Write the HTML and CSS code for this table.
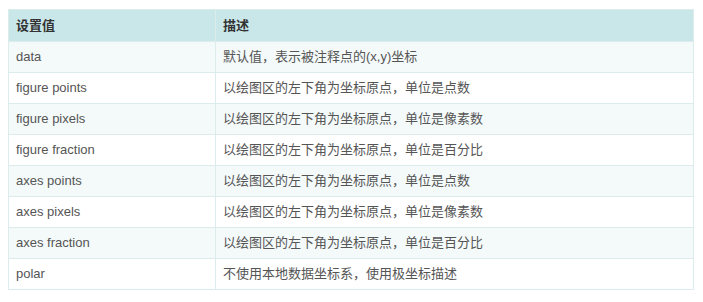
FILE: index.html
```html
<!DOCTYPE html>
<html lang="zh">
<head>
<meta charset="utf-8">
<link rel="stylesheet" href="styles.css">
</head>
<body>
<table class="tbl">
  <thead>
    <tr><th class="c1">设置值</th><th>描述</th></tr>
  </thead>
  <tbody>
    <tr><td>data</td><td>默认值，表示被注释点的(x,y)坐标</td></tr>
    <tr><td>figure points</td><td>以绘图区的左下角为坐标原点，单位是点数</td></tr>
    <tr><td>figure pixels</td><td>以绘图区的左下角为坐标原点，单位是像素数</td></tr>
    <tr><td>figure fraction</td><td>以绘图区的左下角为坐标原点，单位是百分比</td></tr>
    <tr><td>axes points</td><td>以绘图区的左下角为坐标原点，单位是点数</td></tr>
    <tr><td>axes pixels</td><td>以绘图区的左下角为坐标原点，单位是像素数</td></tr>
    <tr><td>axes fraction</td><td>以绘图区的左下角为坐标原点，单位是百分比</td></tr>
    <tr><td>polar</td><td>不使用本地数据坐标系，使用极坐标描述</td></tr>
  </tbody>
</table>
</body>
</html>
```
FILE: styles.css
```css
html, body {
  margin: 0;
  padding: 0;
  background: #ffffff;
}
body {
  padding: 9px 8px 0 8px;
  font-family: "Liberation Sans", "Noto Sans CJK SC", sans-serif;
  font-size: 13px;
  color: #555555;
}
.tbl {
  border-collapse: collapse;
  width: 686px;
  table-layout: fixed;
}
.tbl th, .tbl td {
  border: 1px solid #dcecec;
  text-align: left;
  padding: 0 7px;
  height: 30px;
  line-height: 16px;
  font-weight: normal;
}
.tbl th {
  background: #c9e7e9;
  color: #333333;
  font-weight: bold;
  height: 31px;
}
.tbl .c1 {
  width: 192px;
}
.tbl tbody tr:nth-child(odd) td {
  background: #f4fafa;
}
.tbl tbody tr:nth-child(even) td {
  background: #ffffff;
}
```
